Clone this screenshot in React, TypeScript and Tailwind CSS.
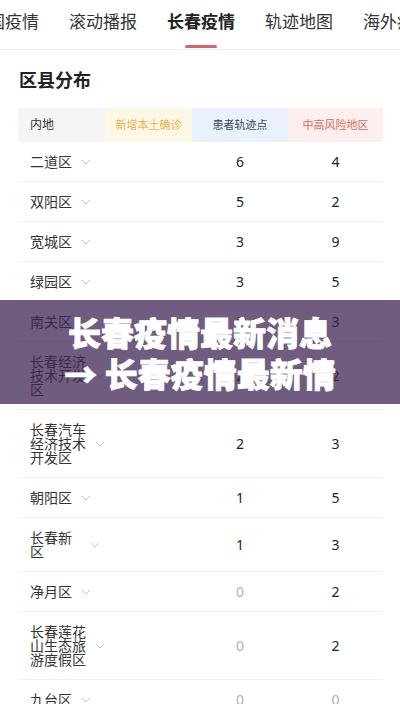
const FONT = { fontFamily: "'Noto Sans', 'Noto Sans CJK SC', sans-serif" };

interface Row {
  lines: string[];
  nameWidth?: string;
  track: number;
  risk: number;
}

const rows: Row[] = [
  { lines: ["二道区"], track: 6, risk: 4 },
  { lines: ["双阳区"], track: 5, risk: 2 },
  { lines: ["宽城区"], track: 3, risk: 9 },
  { lines: ["绿园区"], track: 3, risk: 5 },
  { lines: ["南关区"], track: 5, risk: 3 },
  { lines: ["长春经济", "技术开发", "区"], nameWidth: "w-[58px]", track: 2, risk: 2 },
  { lines: ["长春汽车", "经济技术", "开发区"], nameWidth: "w-[58px]", track: 2, risk: 3 },
  { lines: ["朝阳区"], track: 1, risk: 5 },
  { lines: ["长春新", "区"], nameWidth: "w-[51px]", track: 1, risk: 3 },
  { lines: ["净月区"], track: 0, risk: 2 },
  { lines: ["长春莲花", "山生态旅", "游度假区"], nameWidth: "w-[58px]", track: 0, risk: 2 },
  { lines: ["九台区"], track: 0, risk: 0 },
];

const tabs = ["全国疫情", "滚动播报", "长春疫情", "轨迹地图", "海外疫情"];

function Chevron() {
  return (
    <svg width="10" height="6" viewBox="0 0 10 6" className="shrink-0">
      <polyline points="1,1 5,5 9,1" fill="none" stroke="#c4c4c4" strokeWidth="1" />
    </svg>
  );
}

function Num({ v }: { v: number }) {
  return (
    <div className={`flex items-center justify-center text-[14px] ${v === 0 ? "text-[#b0b0b0]" : "text-[#222]"}`}>
      {v}
    </div>
  );
}

export default function App() {
  return (
    <div className="relative w-[400px] h-[704px] overflow-hidden bg-white" style={FONT}>
      {/* tabs */}
      <div className="h-[50px] border-b border-[#efefef] flex items-start pt-[11px] ml-[-29px] gap-[30px] whitespace-nowrap">
        {tabs.map((t) => (
          <span
            key={t}
            className={`relative shrink-0 text-[17px] leading-[22px] ${
              t === "长春疫情" ? "font-bold text-[#222]" : "text-[#333]"
            }`}
          >
            {t}
            {t === "长春疫情" && (
              <span className="absolute top-[34px] left-1/2 -translate-x-1/2 w-[32px] h-[3px] rounded-full bg-[#d6636b]" />
            )}
          </span>
        ))}
      </div>

      <div className="px-[18px] pt-[18px]">
        <h2 className="text-[18px] leading-[24px] font-bold text-[#222] pl-[1px]">区县分布</h2>

        {/* table */}
        <div className="mt-[16px] w-[365px]">
          <div className="grid grid-cols-[87px_87px_96px_95px] h-[34px]">
            <div className="bg-[#f5f5f5] flex items-center pl-[12px] text-[12px] text-[#333]">内地</div>
            <div className="bg-[#fdf8e6] flex items-center justify-center text-[11px] text-[#e2b44e]">新增本土确诊</div>
            <div className="bg-[#e9f1fc] flex items-center justify-center text-[11px] text-[#3d4857]">患者轨迹点</div>
            <div className="bg-[#fdefee] flex items-center justify-center text-[11px] text-[#d56a5d]">中高风险地区</div>
          </div>

          {rows.map((r, i) => (
            <div
              key={i}
              className="grid grid-cols-[87px_87px_96px_95px] border-b border-[#f0f0f0]"
            >
              <div className="flex items-center gap-[9px] pl-[12px] py-[12.5px]">
                <span className={`text-[14px] leading-[14px] text-[#333] ${r.nameWidth ?? ""}`}>
                  {r.lines.map((l, j) => (
                    <span key={j} className="block">
                      {l}
                    </span>
                  ))}
                </span>
                <Chevron />
              </div>
              <div />
              <Num v={r.track} />
              <Num v={r.risk} />
            </div>
          ))}
        </div>
      </div>

      {/* headline banner over the list */}
      <div className="absolute left-0 right-0 top-[300px] h-[104px] bg-[#3f2654]/75 flex flex-col items-center justify-center pt-[2px]">
        <p
          className="text-white font-black text-[33px] leading-[41px] whitespace-nowrap [-webkit-text-stroke:0.8px_white]"
          style={{ fontFamily: "'Noto Sans CJK SC', sans-serif" }}
        >
          长春疫情最新消息
        </p>
        <p
          className="text-white font-black text-[33px] leading-[41px] whitespace-nowrap [-webkit-text-stroke:0.8px_white]"
          style={{ fontFamily: "'Noto Sans CJK SC', sans-serif" }}
        >
          → 长春疫情最新情
        </p>
      </div>
    </div>
  );
}
